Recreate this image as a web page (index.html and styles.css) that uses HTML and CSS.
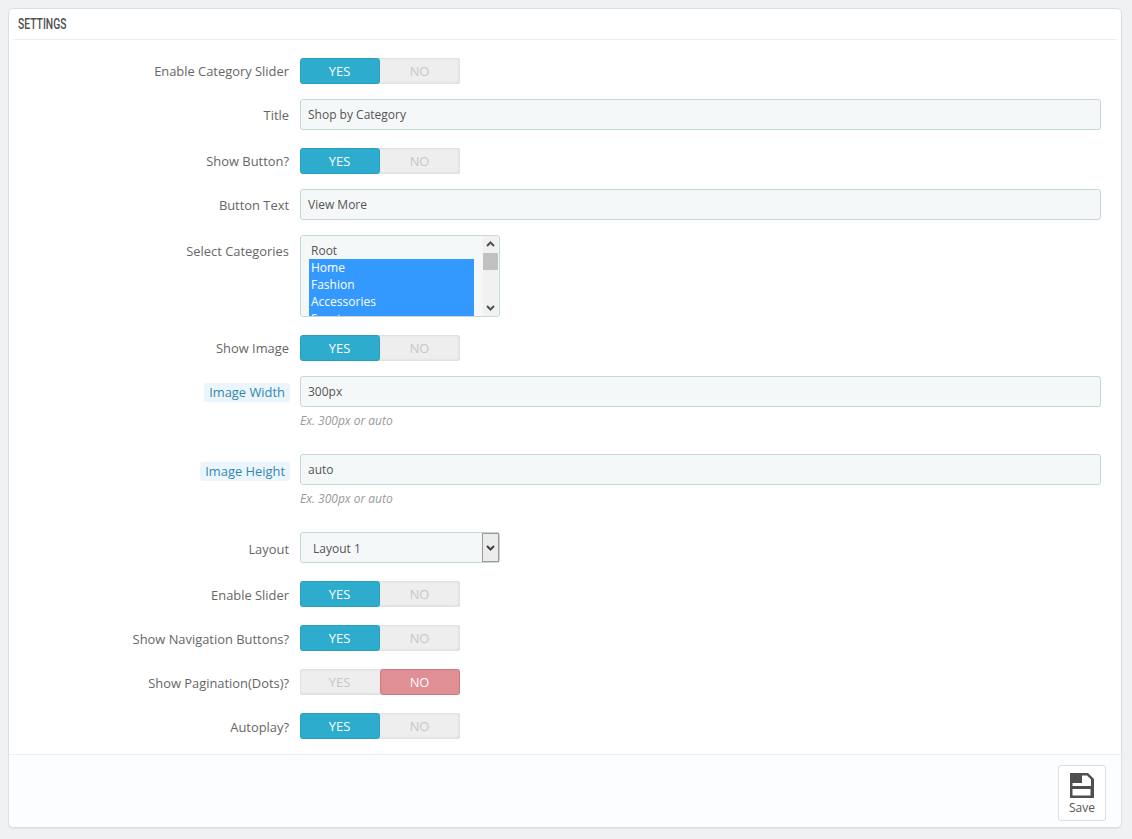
FILE: index.html
```html
<!DOCTYPE html>
<html lang="en">
<head>
<meta charset="utf-8">
<title>Settings</title>
<link rel="stylesheet" href="styles.css">
</head>
<body>
<form class="panel">
  <h3 class="panel-heading"><span class="heading-text">Settings</span></h3>
  <div class="form-body">
    <div class="row row-toggle">
      <label class="label">Enable Category Slider</label>
      <div class="switch"><span class="opt yes on">YES</span><span class="opt no">NO</span></div>
    </div>
    <div class="row">
      <label class="label">Title</label>
      <input class="input" type="text" value="Shop by Category">
    </div>
    <div class="row row-toggle">
      <label class="label">Show Button?</label>
      <div class="switch"><span class="opt yes on">YES</span><span class="opt no">NO</span></div>
    </div>
    <div class="row">
      <label class="label">Button Text</label>
      <input class="input" type="text" value="View More">
    </div>
    <div class="row">
      <label class="label">Select Categories</label>
      <div class="listbox">
        <ul class="list">
          <li class="item">Root</li>
          <li class="item sel">Home</li>
          <li class="item sel">Fashion</li>
          <li class="item sel">Accessories</li>
          <li class="item sel">Sports</li>
        </ul>
        <div class="scrollbar">
          <svg class="arrow" width="15" height="17" viewBox="0 0 15 17"><path d="M4 10l3.500-3.500L11 10" fill="none" stroke="#505050" stroke-width="2"/></svg>
          <div class="track"><div class="thumb"></div></div>
          <svg class="arrow" width="15" height="17" viewBox="0 0 15 17"><path d="M4 7l3.500 3.500L11 7" fill="none" stroke="#505050" stroke-width="2"/></svg>
        </div>
      </div>
    </div>
    <div class="row row-toggle">
      <label class="label">Show Image</label>
      <div class="switch"><span class="opt yes on">YES</span><span class="opt no">NO</span></div>
    </div>
    <div class="row row-help">
      <label class="label"><span class="hint">Image Width</span></label>
      <div class="control">
        <input class="input" type="text" value="300px">
        <p class="help">Ex. 300px or auto</p>
      </div>
    </div>
    <div class="row row-help">
      <label class="label"><span class="hint">Image Height</span></label>
      <div class="control">
        <input class="input" type="text" value="auto">
        <p class="help">Ex. 300px or auto</p>
      </div>
    </div>
    <div class="row row-select">
      <label class="label label-select">Layout</label>
      <div class="select">
        <span class="select-text">Layout 1</span>
        <span class="select-btn"><svg width="15" height="27" viewBox="0 0 15 27"><path d="M4 12l3.500 3.500L11 12" fill="none" stroke="#404040" stroke-width="2"/></svg></span>
      </div>
    </div>
    <div class="row row-toggle">
      <label class="label">Enable Slider</label>
      <div class="switch"><span class="opt yes on">YES</span><span class="opt no">NO</span></div>
    </div>
    <div class="row row-toggle">
      <label class="label">Show Navigation Buttons?</label>
      <div class="switch"><span class="opt yes on">YES</span><span class="opt no">NO</span></div>
    </div>
    <div class="row row-toggle">
      <label class="label">Show Pagination(Dots)?</label>
      <div class="switch"><span class="opt yes">YES</span><span class="opt no on">NO</span></div>
    </div>
    <div class="row row-toggle">
      <label class="label">Autoplay?</label>
      <div class="switch"><span class="opt yes on">YES</span><span class="opt no">NO</span></div>
    </div>
  </div>
  <div class="panel-footer">
    <button class="save" type="button">
      <svg width="26" height="26" viewBox="0 0 26 26"><path fill="#4f4f4f" fill-rule="evenodd" d="M1 1h18l6 6v19H1zM13 3.500h5l4 4V14H3.500v-3H13zM3.500 17H21.500v6.500H3.500z"/></svg>
      <span>Save</span>
    </button>
  </div>
</form>
</body>
</html>
```
FILE: styles.css
```css
* { box-sizing: border-box; }
html, body { margin: 0; padding: 0; }
body {
  background: #eff1f2;
  padding: 8px 10px 12px 8px;
  font-family: "Open Sans", sans-serif;
  font-size: 12px;
  color: #555;
  height: 839px;
  overflow: hidden;
}
.panel {
  background: #fff;
  border: 1px solid #dcdfe1;
  border-radius: 5px;
  box-shadow: 0 1px 1px rgba(0,0,0,0.06);
  height: 820px;
  display: flex;
  flex-direction: column;
}
.panel-heading {
  margin: 0 4px;
  height: 31px;
  padding: 7px 5px 0;
  border-bottom: 1px solid #eee;
  font-family: "Roboto", "Liberation Sans", sans-serif;
  font-size: 14px;
  line-height: 16px;
  font-weight: 500;
  text-transform: uppercase;
  color: #4f4f4f;
}
.heading-text {
  display: inline-block;
  transform: scaleX(0.74);
  transform-origin: left center;
}
.form-body {
  flex: 1;
  padding: 15px 20px 0 0;
}
.row {
  display: flex;
  align-items: flex-start;
  margin-bottom: 15px;
}
.row-toggle { padding-top: 3px; }
.label {
  width: 291px;
  flex: none;
  padding-right: 11px;
  text-align: right;
  font-size: 12.9px;
  line-height: 18px;
  padding-top: 7px;
  color: #666;
}
.row-toggle .label { padding-top: 4px; }
.row-select ~ .row-toggle .label { padding-top: 5px; }
.label-select { padding-top: 8px; }
.row-help + .row-help .label { padding-top: 8px; }
.hint {
  display: inline-block;
  padding: 0 5px;
  margin-top: -1px;
  margin-right: -1px;
  height: 19px;
  line-height: 19px;
  background: #eaf6fb;
  border-radius: 3px;
  color: #3586ae;
}
.switch {
  width: 160px;
  height: 26px;
  display: flex;
  background: #eee;
  border-radius: 3px;
  box-shadow: inset 0 0 0 1px #e2e2e2, inset 0 1px 2px rgba(0,0,0,0.08), inset -1px -1px 2px #d2d2d2;
}
.opt {
  width: 80px;
  padding-right: 1px;
  text-align: center;
  line-height: 27px;
  font-size: 12.9px;
  color: #c7c7c7;
  border-radius: 3px;
}
.opt.yes.on { background: #2eacce; color: #fff; border: 1px solid #29a0c0; line-height: 25px; }
.opt.no.on { background: #e08f95; color: #fff; border: 1px solid #c97a80; line-height: 25px; }
.input {
  flex: 1;
  display: block;
  width: 100%;
  height: 31px;
  padding: 0 7px;
  background: #f5f8f9;
  border: 1px solid #c7d6db;
  border-radius: 3px;
  font-family: "Open Sans", sans-serif;
  font-size: 12px;
  color: #555;
}
.control { flex: 1; }
.help {
  margin: 6px 0 25px;
  height: 16px;
  font-size: 12px;
  line-height: 16px;
  font-style: italic;
  color: #999;
}
.row-help { margin-bottom: 0; }
.listbox {
  width: 200px;
  height: 82px;
  display: flex;
  background: #f5f8f9;
  border: 1px solid #c7d6db;
  border-radius: 3px;
  overflow: hidden;
}
.list {
  list-style: none;
  margin: 0;
  padding: 6px 0 0 8px;
  width: 173px;
  height: 80px;
  overflow: hidden;
}
.item {
  height: 17px;
  line-height: 17px;
  padding-left: 2px;
  font-size: 12px;
}
.item.sel { background: #3399ff; color: #fff; }
.scrollbar {
  margin-left: 9px;
  width: 15px;
  display: flex;
  flex-direction: column;
  background: #f1f1f1;
}
.arrow { flex: none; display: block; }
.track { flex: 1; }
.thumb { height: 17px; background: #c1c1c1; }
.select {
  position: relative;
  width: 200px;
  height: 31px;
  background: #f5f8f9;
  border: 1px solid #c7d6db;
  border-radius: 3px;
}
.select-text { padding-left: 12px; line-height: 31px; display: block; font-size: 12px; }
.select-btn {
  position: absolute;
  top: 0;
  right: 0;
  width: 17px;
  height: 29px;
  background: #ececec;
  border: 1px solid #9a9a9a;
}
.select-btn svg { display: block; }
.panel-footer {
  height: 73px;
  flex: none;
  background: #fcfdfe;
  border-top: 1px solid #eee;
  border-radius: 0 0 5px 5px;
  display: flex;
  justify-content: flex-end;
  padding: 10px 15px 0 0;
}
.save {
  width: 48px;
  height: 56px;
  padding: 6px 0 0;
  background: #fff;
  border: 1px solid #ddd;
  border-radius: 3px;
  display: flex;
  flex-direction: column;
  align-items: center;
  font-family: "Open Sans", sans-serif;
  font-size: 12px;
  color: #555;
}
.save span { line-height: 16px; margin-top: 2px; }
```
